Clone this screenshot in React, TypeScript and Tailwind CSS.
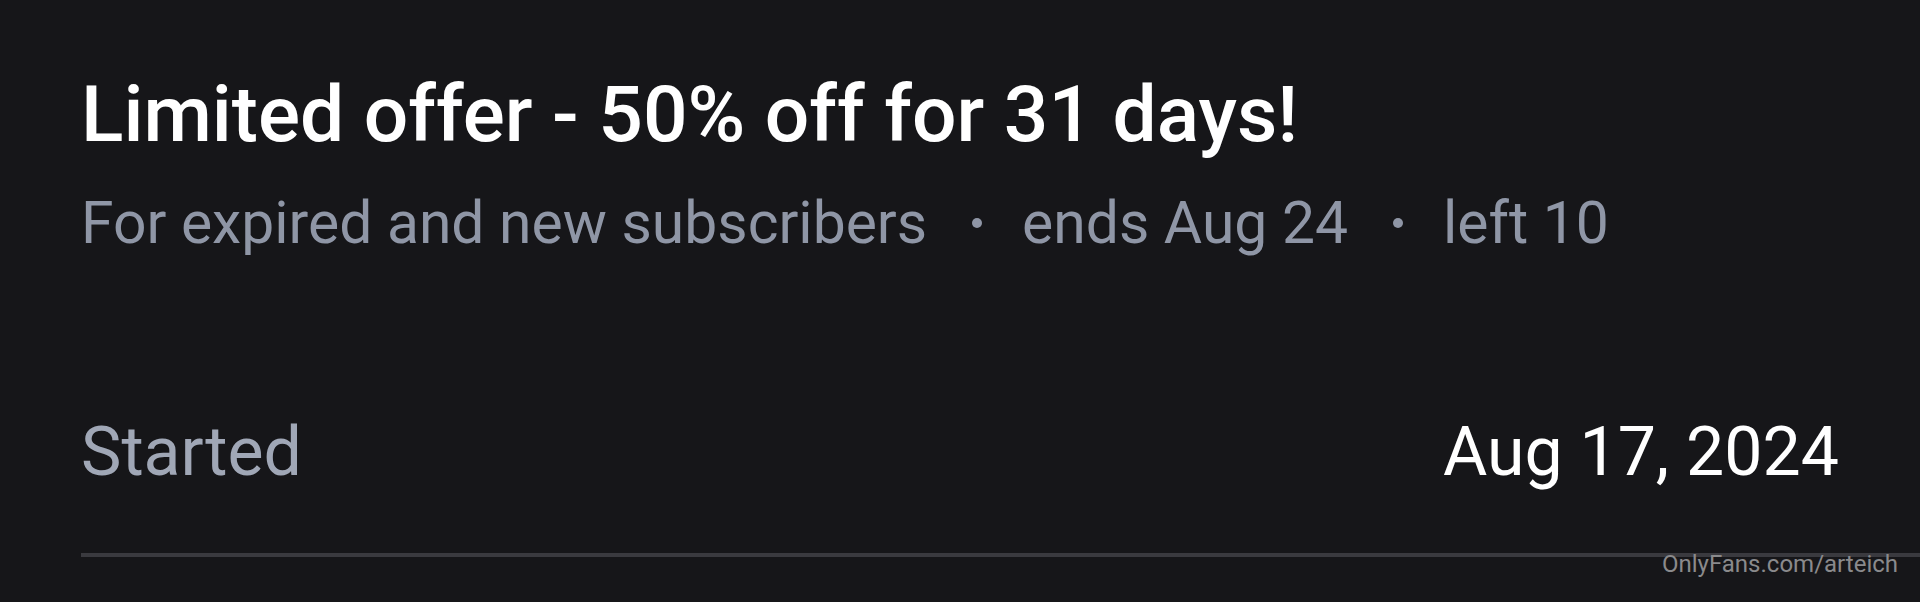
export default function App() {
  return (
    <div className="relative w-[1920px] h-[602px] overflow-hidden bg-[#161619]" style={{ fontFamily: 'Roboto, "Noto Sans", sans-serif' }}>
      <div className="pl-[81px] pt-[75px]">
        <h1 className="text-[78.5px] leading-none font-medium text-white">Limited offer - 50% off for 31 days!</h1>
        <div className="mt-[40px] flex items-center text-[58.8px] leading-none text-[#8f96a6]">
          <span>For expired and new subscribers</span>
          <span className="ml-[45px] mr-[40px] w-[10px] h-[10px] rounded-full bg-[#8f96a6]" />
          <span>ends Aug 24</span>
          <span className="ml-[45px] mr-[40px] w-[10px] h-[10px] rounded-full bg-[#8f96a6]" />
          <span>left 10</span>
        </div>
        <div className="mt-[166px] flex items-start justify-between pr-[81px] text-[68px] leading-none">
          <span className="text-[#a0a7b6]">Started</span>
          <span className="text-white">Aug 17, 2024</span>
        </div>
        <div className="mt-[67px] h-[4px] bg-[#3a3a3f]" />
      </div>
      <div className="absolute right-[22px] top-[552px] text-[24px] leading-none text-[#8a8a8c]">OnlyFans.com/arteich</div>
    </div>
  );
}
